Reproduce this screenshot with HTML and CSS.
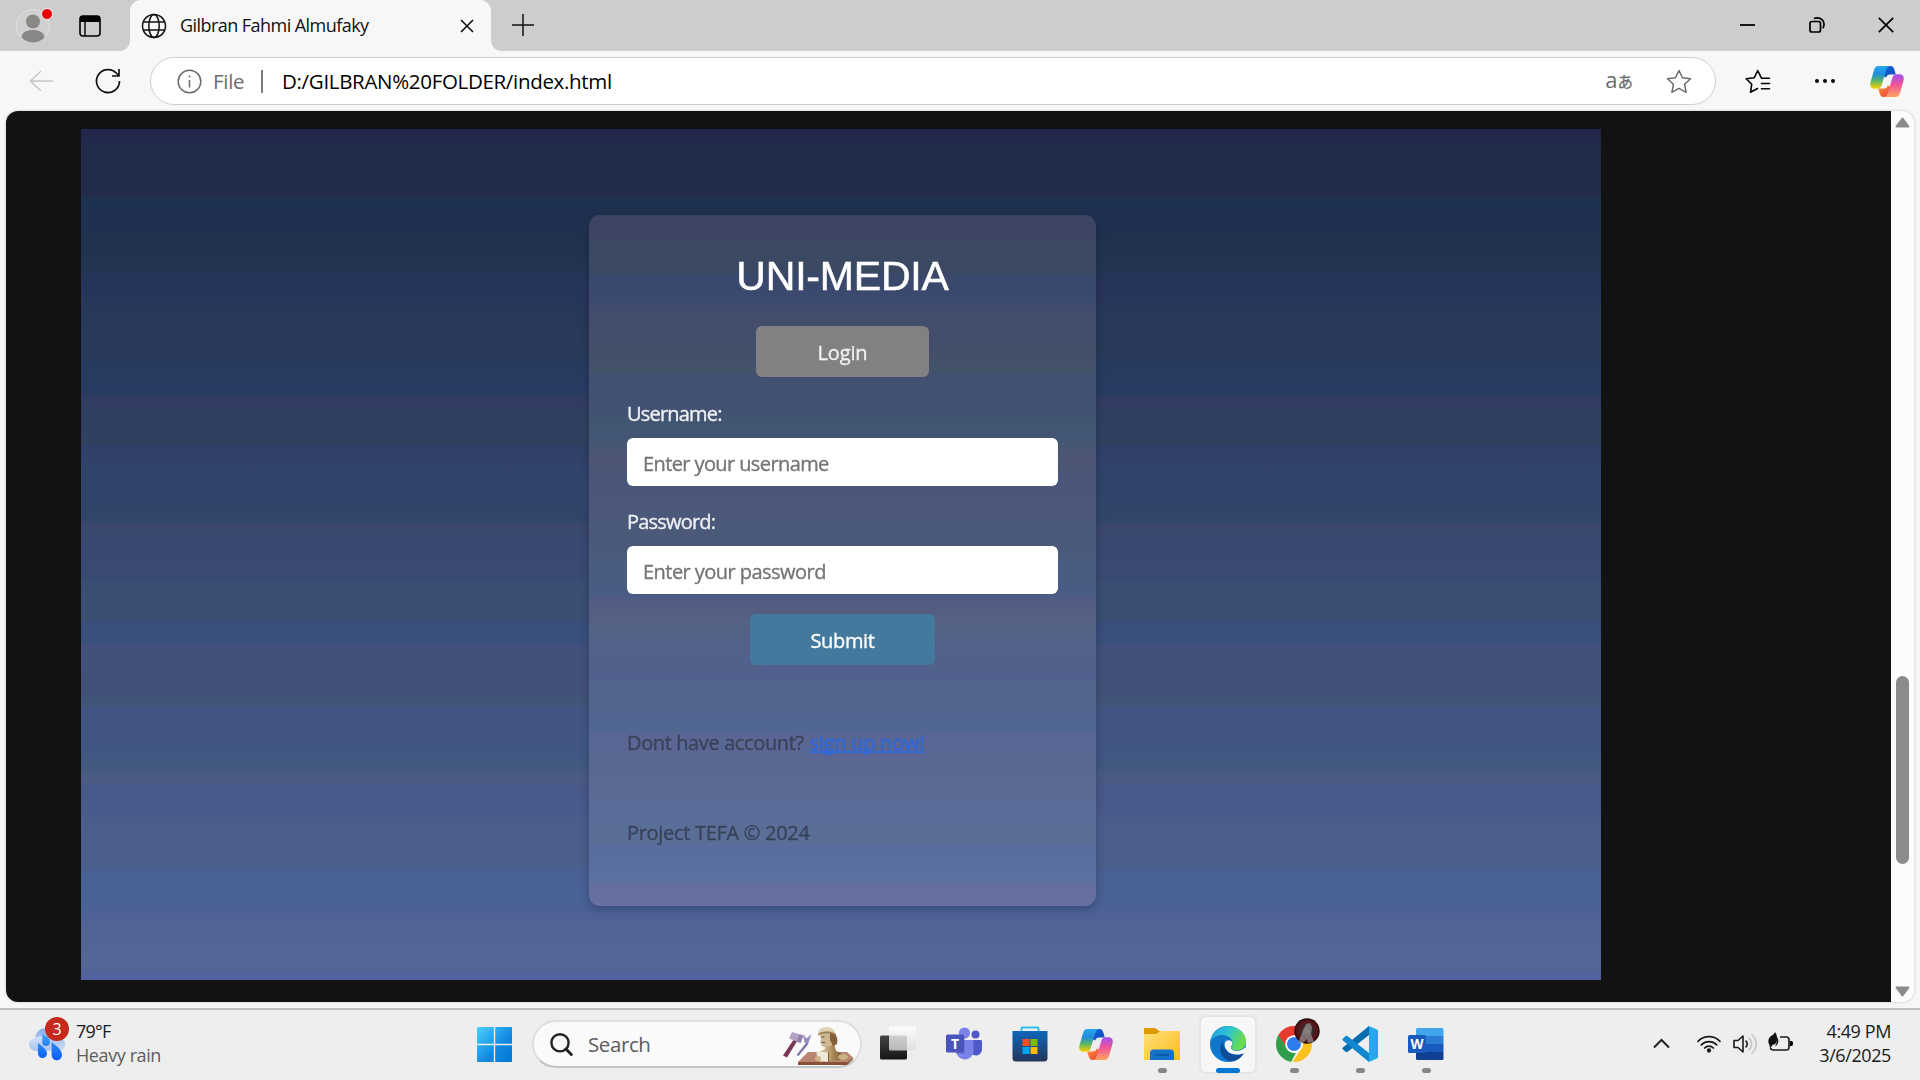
FILE: index.html
```html
<!DOCTYPE html>
<html lang="en">
<head>
<meta charset="utf-8">
<title>Gilbran Fahmi Almufaky</title>
<link rel="stylesheet" href="styles.css">
</head>
<body>
<svg width="0" height="0" class="defs" aria-hidden="true">
  <defs>
    <linearGradient id="cpA" x1="0" y1="0" x2="0" y2="1"><stop offset="0" stop-color="#28a8f0"/><stop offset=".35" stop-color="#1f8ddd"/><stop offset=".65" stop-color="#5cb56a"/><stop offset="1" stop-color="#ffd000"/></linearGradient>
    <linearGradient id="cpB" x1="0" y1="0" x2="0" y2="1"><stop offset="0" stop-color="#a24df0"/><stop offset=".45" stop-color="#f0559a"/><stop offset="1" stop-color="#ffa45c"/></linearGradient>
    <linearGradient id="cpC" x1="0" y1="0" x2="1" y2="1"><stop offset="0" stop-color="#0c6fd8"/><stop offset="1" stop-color="#173fc0"/></linearGradient>
    <linearGradient id="cpD" x1="0" y1="0" x2="1" y2="1"><stop offset="0" stop-color="#ff9a2e"/><stop offset="1" stop-color="#e8383f"/></linearGradient>
    <symbol id="copilot" viewBox="0 0 34 31">
      <path d="M17 0h3.500c2 0 3 1.200 3.600 3l1.700 5.500H20c-2 0-3.200 1-3.800 3L13 10z" fill="url(#cpC)"/>
      <path d="M17 31h-3.500c-2 0-3-1.200-3.600-3L8.200 22.500H14c2 0 3.200-1 3.800-3L21 21z" fill="url(#cpD)"/>
      <path d="M8.500 0H20c-2 .3-3 1.600-3.700 4l-4.600 15c-.8 2.500-2 3.700-4.700 3.700H4.500C1 22.700-.6 20 .5 16.300L4 4C4.800 1.400 6 0 8.500 0z" fill="url(#cpA)"/>
      <path d="M25.500 31H14c2-.3 3-1.600 3.700-4l4.600-15c.8-2.500 2-3.700 4.700-3.700h2.500c3.500 0 5.100 2.700 4 6.400L30 27c-.8 2.600-2 4-4.500 4z" fill="url(#cpB)"/>
    </symbol>
  </defs>
</svg>

<div class="screen">
  <header class="tabstrip">
    <svg class="avatar" width="42" height="42" viewBox="0 0 42 42"><circle cx="21" cy="22" r="16.500" fill="#d2d0ce" stroke="#e3e2e1"/><circle cx="21" cy="17.500" r="7" fill="#8a8886"/><path d="M9.500 33.500C10 28 15 26 21 26s11 2 11.500 7.500C29.500 37 25.500 38.500 21 38.500S12.500 37 9.500 33.500z" fill="#8a8886"/><circle cx="35" cy="10" r="5.500" fill="#e60000" stroke="#f3f3f3"/></svg>
    <svg class="workspaces" width="22" height="22" viewBox="0 0 22 22"><rect x="1" y="1" width="20" height="20" rx="3" fill="none" stroke="#000" stroke-width="1.600"/><path d="M1 7V4a3 3 0 0 1 3-3h14a3 3 0 0 1 3 3v3z"/><path d="M6 7v14" stroke="#000" stroke-width="1.400"/></svg>
    <div class="tab">
      <svg width="26" height="26" viewBox="0 0 26 26" fill="none" stroke="#111" stroke-width="1.500"><circle cx="13" cy="13" r="11.500"/><ellipse cx="13" cy="13" rx="5.200" ry="11.500"/><path d="M2.500 9h21M2.500 17h21"/></svg>
      <span class="tab-title">Gilbran Fahmi Almufaky</span>
      <svg class="tab-close" width="14" height="14" viewBox="0 0 14 14" stroke="#111" stroke-width="1.600"><path d="M1 1l12 12M13 1L1 13"/></svg>
    </div>
    <svg class="newtab" width="22" height="22" viewBox="0 0 22 22" stroke="#111" stroke-width="1.500"><path d="M11 0v22M0 11h22"/></svg>
    <div class="winbtns">
      <svg width="16" height="16" viewBox="0 0 16 16"><path d="M0 8h15" stroke="#000" stroke-width="1.800"/></svg>
      <svg width="16" height="16" viewBox="0 0 16 16" fill="none" stroke="#000" stroke-width="1.700"><rect x="1" y="4.500" width="10.500" height="10.500" rx="2"/><path d="M5 1.500C6 .9 7 .9 8.500.9 12 .9 15 3.500 15 7c0 2 0 3.500-1.500 4"/></svg>
      <svg width="16" height="16" viewBox="0 0 16 16" stroke="#000" stroke-width="1.700"><path d="M.8.800l14.400 14.400M15.200.800L.8 15.200"/></svg>
    </div>
  </header>

  <div class="toolbar">
    <svg class="back" width="25" height="22" viewBox="0 0 25 22" fill="none" stroke="#c6c6c6" stroke-width="1.500"><path d="M24 11H1.500M12 1L1.500 11 12 21"/></svg>
    <svg class="reload" width="26" height="26" viewBox="0 0 26 26" fill="none" stroke="#111" stroke-width="1.700"><path d="M24.500 13A11.500 11.500 0 1 1 21.500 5.300l2 2.200M24 1v7h-7"/></svg>
    <div class="address">
      <svg width="25" height="25" viewBox="0 0 25 25" fill="none" stroke="#6b6b6b" stroke-width="1.500"><circle cx="12.500" cy="12.500" r="11.300"/><path d="M12.500 11v7.500M12.500 6.500v2"/></svg>
      <span class="scheme">File</span>
      <span class="bar"></span>
      <span class="url">D:/GILBRAN%20FOLDER/index.html</span>
      <span class="translate"><span class="latin">a</span><span class="kana">あ</span></span>
      <svg class="fav" width="26" height="25" viewBox="0 0 26 25" fill="none" stroke="#6b6b6b" stroke-width="1.500" stroke-linejoin="round"><path d="M13 1.500l3.500 7.300 8 1-5.900 5.500 1.500 8L13 19.400l-7.100 3.900 1.500-8L1.500 9.800l8-1z"/></svg>
    </div>
    <svg class="favs" width="26" height="25" viewBox="0 0 26 25" fill="none" stroke="#000" stroke-width="1.600" stroke-linejoin="round" stroke-linecap="round"><path d="M16.500 9.200L12.700 1.500 9.200 8.800l-8 1 5.500 5.500-1.200 8L12.500 19.500M16.500 9.200h8M16.500 14.500h8M16.500 19.700h8"/></svg>
    <svg class="more" width="22" height="6" viewBox="0 0 22 6"><circle cx="3" cy="3" r="2"/><circle cx="11" cy="3" r="2"/><circle cx="19" cy="3" r="2"/></svg>
    <svg class="cp" width="34" height="31"><use href="#copilot"/></svg>
  </div>

  <main class="viewport">
    <div class="page">
      <section class="hero">
        <form class="card">
          <h1>UNI-MEDIA</h1>
          <div class="btn login">Login</div>
          <label>Username:</label>
          <div class="field user">Enter your username</div>
          <label>Password:</label>
          <div class="field pass">Enter your password</div>
          <div class="btn submit">Submit</div>
          <p class="signup"><span class="ask">Dont have account?</span> <a>sign up now!</a></p>
          <p class="copy">Project TEFA © 2024</p>
        </form>
      </section>
    </div>
    <div class="scrollbar">
      <svg width="15" height="11" viewBox="0 0 15 11"><path d="M7.500 1.500L13.500 9.500h-12z" fill="#8b8b8b" stroke="#8b8b8b" stroke-width="2" stroke-linejoin="round"/></svg>
      <div class="thumb"></div>
      <svg class="down" width="15" height="11" viewBox="0 0 15 11"><path d="M7.500 9.500L13.500 1.500h-12z" fill="#8b8b8b" stroke="#8b8b8b" stroke-width="2" stroke-linejoin="round"/></svg>
    </div>
  </main>

  <footer class="taskbar">
    <div class="weather">
      <svg width="36" height="46" viewBox="0 0 36 46"><defs><linearGradient id="cl" x1="0" y1="0" x2="0" y2="1"><stop offset="0" stop-color="#86aef0"/><stop offset="1" stop-color="#cfdcf5"/></linearGradient><linearGradient id="cm" x1="0" y1="0" x2="0" y2="1"><stop offset="0" stop-color="#d3e1f8"/><stop offset="1" stop-color="#aac4ee"/></linearGradient><linearGradient id="dr" x1="0" y1="0" x2="0" y2="1"><stop offset="0" stop-color="#3fa0f8"/><stop offset="1" stop-color="#0a5cf5"/></linearGradient></defs>
        <path d="M6 24C6 16 11 12 18 12s11 4 12 9c4 1 6 4 6 8s-3 6-7 6H12z" fill="url(#cl)"/>
        <path d="M7 35c-4 0-7-3-7-6.500S3 22 7 22c3-3 8-2 10 1 4 0 6 3 6 6s-2 6-6 6z" fill="url(#cm)"/>
        <path d="M13.500 18c4.500 2.500 7.500 5 7.500 8a3.900 3.900 0 0 1-7.800 0zM9 27c5 3.500 9 7 9 10.500a4.500 4.500 0 0 1-9 0zM22.500 26c6 4.500 10.500 8 10.500 13a5.200 5.200 0 0 1-10.400 0z" fill="url(#dr)"/></svg>
      <span class="badge">3</span>
      <div class="wtext"><div class="temp">79°F</div><div class="cond">Heavy rain</div></div>
    </div>

    <div class="center">
      <svg class="start" width="35" height="35" viewBox="0 0 35 35"><defs><linearGradient id="wn" x1="0" y1="0" x2="1" y2="1"><stop offset="0" stop-color="#4cd0fc"/><stop offset=".6" stop-color="#1288e0"/><stop offset="1" stop-color="#0078d4"/></linearGradient></defs><path d="M1 0h15.800v16.800H0V1a1 1 0 0 1 1-1zM18.200 0H34a1 1 0 0 1 1 1v15.800H18.200zM0 18.200h16.800V35H1a1 1 0 0 1-1-1zM18.200 18.200H35V34a1 1 0 0 1-1 1H18.200z" fill="url(#wn)"/></svg>
      <div class="search">
        <svg width="23" height="23" viewBox="0 0 23 23" fill="none" stroke="#222" stroke-width="2.400" stroke-linecap="round"><circle cx="10" cy="9.800" r="8.600"/><path d="M16 16l5.300 5.500" stroke-width="3"/></svg>
        <span class="stext">Search</span>
        <svg class="art" width="70" height="38" viewBox="0 0 70 38">
          <defs><linearGradient id="bu" x1="0" y1="0" x2="1" y2="0"><stop offset="0" stop-color="#e4d8bd"/><stop offset=".5" stop-color="#b99a68"/><stop offset="1" stop-color="#7b5a35"/></linearGradient></defs>
          <path d="M25 25h39l6 5.500-6 4.500H15z" fill="#b88670"/><path d="M15 35h49l6-4.500v1.500L64 38H15z" fill="#8a4f36"/>
          <path d="M11 12l3.500 1.500L4 30.500l-4-2z" fill="#7a3655"/><path d="M9 5l11.500 3.500-3 7.500L6 11.500z" fill="#b3a2c3"/><path d="M16.500 7.300l4 1.200-3 7.500-4-1.500z" fill="#9583ac"/>
          <path d="M23.500 15.500l2 1.300L15.500 29l-2-1z" fill="#7b72a8"/><path d="M20 7l3.500 4.500L28.500 7l-3.500 10-3.500-1.500z" fill="#958bbd"/>
          <path d="M42 18l9-2 2 8c3 1 6 2 6 5l-2 4-20 2-2-10 7-3z" fill="url(#bu)"/>
          <path d="M36.500 6h14c1 5 1 9-1.500 12.500l-6 1.500c-3 .500-5-1-5-3.500l-1-1.500 1-3z" fill="#cdb991"/>
          <path d="M47 6l4-1c3 4 4.500 9 2.500 12.500L50 19l-3-6z" fill="#83623a"/>
          <path d="M35 7c0-5 4-7 8.500-7C49 0 52 3 52.500 7c-5-3-12-3-17.500 0z" fill="#e0d3b6"/><path d="M35 7c5-4 13-3.500 17.500 0v1.500c-5-3-12-3-17.500 0z" fill="#9d8054"/>
          <path d="M38.500 10h3M39 15.500h3" stroke="#66502f" stroke-width="1.200"/>
          <path d="M33 24l12 1.500V35l-10-2z" fill="#efe8d8"/><path d="M45 25.500l1-.5v10h-1z" fill="#806038"/><ellipse cx="35" cy="31.500" rx="3" ry="2.500" fill="#cdb688"/><ellipse cx="60" cy="30" rx="5" ry="3" fill="#c9b182"/>
        </svg>
      </div>
      <div class="app"><svg width="36" height="36" viewBox="0 0 36 36"><defs><linearGradient id="tv" x1="0" y1="0" x2="0" y2="1"><stop offset="0" stop-color="#444"/><stop offset="1" stop-color="#161616"/></linearGradient><linearGradient id="tw" x1="0" y1="0" x2="0" y2="1"><stop offset="0" stop-color="#fff"/><stop offset="1" stop-color="#ddd"/></linearGradient></defs><rect x="0" y="9.500" width="27" height="24" rx="1.500" fill="url(#tv)"/><rect x="9" y=".5" width="27" height="24" rx="1.500" fill="url(#tw)" opacity=".8"/></svg></div>
      <div class="app"><svg width="36" height="36" viewBox="0 0 36 36"><circle cx="18.500" cy="7" r="5.600" fill="#7b83eb"/><circle cx="29.500" cy="8.500" r="4" fill="#5059c9"/><path d="M24 14h10.500c1 0 1.500.6 1.500 1.500V23c0 4-3 6.500-6 6.500-4 0-6-3-6-6z" fill="#5059c9"/><path d="M11 14h15c1 0 1.500.6 1.500 1.500v9c0 5-4 9-8.500 9s-9-4-9-9v-9z" fill="#7b83eb"/><path d="M10 10h9v18h-9z" fill="#444791" opacity=".25"/><rect x="0" y="8.500" width="18" height="18" rx="1.600" fill="#4b53bc"/><text x="9" y="22.500" text-anchor="middle" class="glyph" font-size="14">T</text></svg></div>
      <div class="app"><svg width="36" height="36" viewBox="0 0 36 36"><defs><linearGradient id="st" x1="0" y1="0" x2="0" y2="1"><stop offset="0" stop-color="#0f66ba"/><stop offset="1" stop-color="#24365c"/></linearGradient></defs><path d="M9.500 6V2.500a1 1 0 0 1 1-1h15a1 1 0 0 1 1 1V6" fill="none" stroke="#2fc0f2" stroke-width="2"/><path d="M.5 5h35v27a3.500 3.500 0 0 1-3.500 3.500H4A3.500 3.500 0 0 1 .5 32z" fill="url(#st)"/><path d="M10.500 13h7v7h-7z" fill="#f25022"/><path d="M18.500 13h7v7h-7z" fill="#7fba00"/><path d="M10.500 21h7v7h-7z" fill="#00a4ef"/><path d="M18.500 21h7v7h-7z" fill="#ffb900"/></svg></div>
      <div class="app"><svg width="34" height="31"><use href="#copilot"/></svg></div>
      <div class="app run"><svg width="36" height="36" viewBox="0 0 36 36"><defs><linearGradient id="fo" x1="0" y1="0" x2="1" y2="1"><stop offset="0" stop-color="#ffe07a"/><stop offset="1" stop-color="#fdbb1f"/></linearGradient></defs><path d="M0 3a1 1 0 0 1 1-1h9.500c2 0 3 3 5.500 3v5H0z" fill="#dd9a00"/><path d="M0 8h12c2 0 2.500-3 5-3h18a1 1 0 0 1 1 1v28H0z" fill="url(#fo)"/><path d="M6 34V27a3.500 3.500 0 0 1 3.500-3.500h17A3.500 3.500 0 0 1 30 27v7z" fill="#1272c8"/><path d="M11 29h14" stroke="#0b559e" stroke-width="1.600"/></svg><i></i></div>
      <div class="app run active"><svg width="36" height="36" viewBox="0 0 36 36"><defs><linearGradient id="ea" x1="0" y1="0" x2="1" y2=".4"><stop offset="0" stop-color="#1f95e0"/><stop offset=".5" stop-color="#2cc4d3"/><stop offset="1" stop-color="#6bdc4c"/></linearGradient><linearGradient id="eb" x1="0" y1="0" x2="0" y2="1"><stop offset="0" stop-color="#1573bd"/><stop offset="1" stop-color="#0a7ad8"/></linearGradient></defs><circle cx="18" cy="18" r="18" fill="url(#eb)"/><path d="M.3 15.500C1.500 6 9 0 18 0c10 0 18 7 18 15 0 6-4 9.500-9 9.500-4 0-6-1.500-6-3 0-1.200 1.500-1.500 1.500-4.500 0-4-4-8-10-8C7 9 3 11.500.3 15.500z" fill="url(#ea)"/><path d="M13.500 15c-4 3.500-4.500 11-.5 15.500 3 3.500 7 5.500 11 4.500 4-1 8-4 10-8-5 2.500-13 3-17-1.500-3-3.500-5-7.500-3.500-10.500z" fill="#104c94"/><path d="M15 16.500c1.500-3 6.500-3 7.300.3.400 2.500-1.500 3-1.500 4.700 0 2.200 3 3.400 6.500 3.400 2.500 0 5.500-.8 7.700-3.300L37 23l-2.300 4c-4 2-12.500 2.500-16.700-1.500-3-2.800-4-6-3-9z" fill="#f7f7f7"/></svg><i></i></div>
      <div class="app run"><svg class="chrome" width="44" height="44" viewBox="0 0 44 44"><defs><clipPath id="cc"><circle cx="18" cy="26" r="18"/></clipPath><radialGradient id="av"><stop offset="0" stop-color="#777"/><stop offset=".45" stop-color="#3b2627"/><stop offset=".8" stop-color="#5c1418"/><stop offset="1" stop-color="#160608"/></radialGradient></defs><g clip-path="url(#cc)"><path d="M0 8h36v9.500H18l-7.400 12.800L0 14z" fill="#e63b2e"/><path d="M0 8l2.500 9 8 13.300c2 3.500 5 4.500 7.500 4.500h2L15 44H-2V14z" fill="#2f9e4b"/><path d="M18 17.500h20V44H16.500l8.900-13.500c3-5 .6-11-7.400-13z" fill="#fcc31e"/></g><circle cx="18" cy="26" r="8.800" fill="#fff"/><circle cx="18" cy="26" r="7" fill="#2f7bf0"/><circle cx="31" cy="13" r="12.700" fill="url(#av)"/><path d="M22 25l4-10 4-9 4-1 2 4-1 7 3 8-6 1-1-4-4 4z" fill="#8b8585" opacity=".8"/></svg><i></i></div>
      <div class="app run"><svg width="36" height="36" viewBox="0 0 36 36"><path d="M1 23.500l2.500 2.300c.7.600 1.500.5 2.200 0L27 9V0L.9 21.500c-.7.700-.6 1.400.1 2z" fill="#0a6cb0"/><path d="M.9 14.500c-.7-.7-.6-1.400.1-2l2.500-2.300c.7-.6 1.500-.5 2.200 0L27 27v9z" fill="#1187cf"/><path d="M27 0l8 3.500c.7.400 1 1 1 1.800v25.400c0 .8-.3 1.400-1 1.800L27 36z" fill="#27a8ee"/></svg><i></i></div>
      <div class="app run"><svg width="36" height="36" viewBox="0 0 36 36"><path d="M9.500 2H34a1.500 1.500 0 0 1 1.500 1.500V10H8V3.500A1.500 1.500 0 0 1 9.500 2z" fill="#41a5ee"/><path d="M8 10h27.500v8H8z" fill="#2b7cd3"/><path d="M8 18h27.500v8H8z" fill="#185abd"/><path d="M8 26h27.500v6.500A1.500 1.500 0 0 1 34 34H9.500A1.500 1.500 0 0 1 8 32.500z" fill="#103f91"/><rect x="0" y="9" width="18" height="18" rx="1.600" fill="#185abd"/><text x="9" y="23" text-anchor="middle" class="glyph" font-size="13.500">W</text></svg><i></i></div>
    </div>

    <div class="tray">
      <svg class="chev" width="17" height="11" viewBox="0 0 17 11" fill="none" stroke="#222" stroke-width="2"><path d="M1 9.500l7.500-7.500L16 9.500"/></svg>
      <svg class="wifi" width="24" height="20" viewBox="0 0 24 20" fill="none" stroke="#1b1b1b" stroke-width="1.700" stroke-linecap="round"><path d="M1 7.300a15.500 15.500 0 0 1 22 0M4.300 10.800a10.800 10.800 0 0 1 15.400 0M7.600 14a6.300 6.300 0 0 1 8.800 0"/><circle cx="12" cy="16.500" r="1.300" fill="#1b1b1b"/></svg>
      <svg class="vol" width="25" height="20" viewBox="0 0 25 20" fill="none" stroke="#1b1b1b" stroke-width="1.600" stroke-linejoin="round" stroke-linecap="round"><path d="M1 6.500h4L10 2v16l-5-4.500H1zM13 7c1.500 1.800 1.500 4.200 0 6"/><path d="M16 4c3.500 3.500 3.500 8.500 0 12M19 1c5.500 5 5.500 13 0 18" stroke="#c3c3c3"/></svg>
      <svg class="bat" width="25" height="20" viewBox="0 0 25 20"><path d="M12 5h6.500A2.500 2.500 0 0 1 21 7.500v8a2.500 2.500 0 0 1-2.500 2.500H5a2.500 2.500 0 0 1-2.500-2" fill="none" stroke="#1b1b1b" stroke-width="1.700"/><path d="M22 9h1.500c1 0 1.500 1 1.500 2.500s-.5 2.500-1.500 2.500H22z"/><path d="M7 0c2.500 3 3 9 .2 12L4.500 13 2 16.500 1.500 13C-.5 10 0 5.500 4 3.500 5.500 2.800 6.500 1.500 7 0zM9.500 5c1.500 4 1 7.500-2.500 9.500l1.500-3.500z" fill="#111"/></svg>
      <div class="clock"><div class="time">4:49 PM</div><div class="date">3/6/2025</div></div>
    </div>
  </footer>
</div>
</body>
</html>
```
FILE: styles.css
```css
* { box-sizing: border-box; }
body { margin: 0; font-family: "Open Sans", "Noto Sans", sans-serif; color: #1b1b1b; }
svg { display: block; flex: none; overflow: visible; }
span, p, label, h1, .field, .btn, .clock div, .wtext div { white-space: nowrap; }
.defs { position: absolute; }
.screen { width: 1920px; height: 1080px; overflow: hidden; display: flex; flex-direction: column; background: #f7f7f7; }

.tabstrip { height: 51px; flex: none; background: #cdcdcd; display: flex; align-items: center; }
.avatar { margin: 0 0 2px 12px; }
.workspaces { margin-left: 25px; }
.tab { position: relative; width: 361px; height: 51px; margin-left: 29px; padding: 0 17px 0 11px; display: flex; align-items: center; background: #f7f7f7; border-radius: 11px 11px 0 0; }
.tab::before, .tab::after { content: ""; position: absolute; bottom: 0; width: 10px; height: 10px; }
.tab::before { left: -10px; background: radial-gradient(circle at 0 0, transparent 9.500px, #f7f7f7 10px); }
.tab::after { right: -10px; background: radial-gradient(circle at 100% 0, transparent 9.500px, #f7f7f7 10px); }
.tab-title { margin-left: 13px; margin-bottom: 1px; font-size: 18px; line-height: 24px; letter-spacing: -0.55px; color: #111; }
.tab-close { margin-left: auto; }
.newtab { margin-left: 21px; margin-bottom: 2px; }
.winbtns { display: flex; gap: 53px; margin: 0 26px 1px auto; }

.toolbar { height: 60px; flex: none; display: flex; align-items: center; }
.back { margin-left: 29px; margin-bottom: 1px; }
.reload { margin-left: 41px; }
.address { width: 1566px; height: 48px; margin-left: 29px; padding: 0 23px 0 26px; display: flex; align-items: center; background: #fff; border: 1px solid #cfcfcf; border-radius: 24px; }
.scheme { margin-left: 11px; width: 48px; font-size: 20.500px; letter-spacing: -0.3px; color: #6b6b6b; }
.bar { width: 2px; height: 23px; background: #7d7d7d; }
.url { margin-left: 19px; font-size: 20.500px; letter-spacing: -0.32px; color: #000; }
.translate { margin-left: auto; margin-bottom: 3px; display: flex; align-items: baseline; color: #6b6b6b; line-height: 24px; }
.latin { font-size: 22px; }
.kana { font-family: "Noto Sans CJK JP", sans-serif; font-size: 15.500px; -webkit-text-stroke: .3px #6b6b6b; }
.fav { margin-left: 33px; }
.favs { margin-left: 29px; }
.more { margin-left: 43px; }
.cp { margin-left: 34px; }

.viewport { height: 891px; width: 1908px; flex: none; margin-left: 6px; display: flex; border-radius: 12px; overflow: hidden; background: #fcfcfc; box-shadow: 0 0 2px 1px #dedede; }
.page { width: 1885px; background: #121212; padding: 18px 0 0 75px; }
.hero {
  width: 1520px; height: 851px; padding: 86px 0 0 508px;
  background: linear-gradient(#20254b 0, #212b4b 17px, #212b4a 67px, #1f3150 69px, #203150 108px, #213450 137px, #27345a 149px, #28355a 171px, #283859 178px, #293a59 229px, #263b60 235px, #293b62 264px, #313c62 269px, #303f61 286px, #31405f 315px, #303f69 318px, #32426b 338px, #30446b 344px, #31456b 390px, #3b486b 398px, #3a4872 413px, #3a4a73 450px, #3a4e73 453px, #3b4f73 490px, #394e7c 496px, #3a507b 513px, #43507b 519px, #425079 562px, #425578 574px, #435683 579px, #425683 625px, #41597f 637px, #4c5a83 648px, #485889 660px, #4a5a8a 686px, #4b5d8b 689px, #4c5e8b 737px, #496094 743px, #4a6295 780px, #526196 792px, #546494 803px, #546596 838px, #51629f 849px);
}
.card {
  width: 507px; height: 691px; padding: 38px 38px 0; display: flex; flex-direction: column; align-items: flex-start; border-radius: 11px; font-size: 20px; line-height: 24px; -webkit-text-stroke: .35px; box-shadow: 0 3px 9px rgba(10, 15, 40, .3);
  background: linear-gradient(#3b4461 0, #3c4663 23px, #3b4964 25px, #3b4862 57px, #3a486b 60px, #3c4970 87px, #424c6c 92px, #444f6a 142px, #435368 152px, #425070 162px, #425173 192px, #42556f 205px, #435675 225px, #495672 232px, #4d5672 248px, #4a567a 262px, #4b5a79 338px, #485d80 345px, #495c84 378px, #535c82 388px, #546283 408px, #53618a 425px, #515f8c 462px, #50648d 465px, #516690 515px, #5a6693 522px, #5b6994 578px, #5a6d98 588px, #5a6e98 625px, #596c9e 632px, #5a6ea0 652px, #5a719f 662px, #656f9d 672px, #666f9f 691px);
  filter: blur(.4px);
}
.card h1 { margin: 0; align-self: center; font: 400 41px/46px "Liberation Sans", sans-serif; letter-spacing: -0.2px; color: #fff; -webkit-text-stroke: .5px #fff; }
.btn { align-self: center; height: 51px; padding-top: 1px; line-height: 51px; border-radius: 6px; text-align: center; color: #f1f1f1; }
.login { width: 173px; margin-top: 27px; background: #828082; letter-spacing: -0.15px; }
.submit { width: 185px; margin-top: 20px; background: #42799c; color: #fff; letter-spacing: -0.35px; }
label { margin-top: 25px; color: #eef0f5; letter-spacing: -0.8px; }
.field + label { margin-top: 24px; }
.field { width: 431px; height: 48px; margin-top: 12px; padding: 2px 16px 0; line-height: 48px; background: #fff; border-radius: 6px; color: #757575; letter-spacing: -0.6px; }
.field.pass { letter-spacing: -0.54px; }
.card p { margin: 66px 0 0; color: #38435a; letter-spacing: -0.38px; }
.card .copy { margin-top: 66px; letter-spacing: -0.3px; }
.signup a { margin-left: 1px; color: #2d68dc; letter-spacing: -0.25px; text-decoration: underline; text-decoration-thickness: 2px; text-decoration-skip-ink: none; }
.scrollbar { width: 23px; padding-top: 6px; display: flex; flex-direction: column; align-items: center; }
.thumb { width: 13px; height: 188px; margin-top: 548px; border-radius: 7px; background: #8b8b8b; }
.down { margin-top: 122px; }

.taskbar { height: 72px; flex: none; margin-top: 6px; border-top: 2px solid #bfbfbf; background: #eee; display: flex; font-size: 18px; line-height: 24px; }
.weather { position: relative; width: 477px; padding: 6px 0 0 29px; display: flex; }
.badge { position: absolute; left: 45px; top: 7px; width: 24px; height: 24px; border-radius: 50%; background: #c42b1c; color: #fff; font-size: 16px; text-align: center; }
.wtext { margin-left: 11px; margin-top: 3px; }
.temp { letter-spacing: -0.8px; }
.cond { color: #5d5d5d; letter-spacing: -0.4px; }
.center { display: flex; width: 1176px; }
.start { margin-top: 17px; }
.search { width: 330px; height: 48px; margin: 10px 7px 0 20px; padding: 0 7px 0 16px; display: flex; align-items: center; background: #fafafa; border: 2px solid #dedede; border-bottom-color: #c4c4c4; border-radius: 24px; }
.stext { margin-left: 15px; font-size: 20.500px; color: #5c5c5c; letter-spacing: -0.4px; }
.art { margin-left: auto; margin-top: 3px; }
.app { position: relative; width: 58px; height: 59px; margin: 5px 8px 0 0; display: flex; align-items: center; justify-content: center; padding-bottom: 1px; border-radius: 7px; }
.app i { position: absolute; left: 25px; bottom: 1px; width: 9px; height: 5px; border-radius: 3px; background: #868686; }
.active { background: #f7f7f7; border: 2px solid #e4e4e4; }
.active i { left: 15px; bottom: -1px; width: 24px; background: #0078d4; }
.chrome { margin: -8px -8px 0 0; }
.glyph { fill: #fff; font-family: "Open Sans", sans-serif; font-weight: 700; }
.tray { width: 238px; display: flex; }
.chev { margin-top: 28px; }
.wifi { margin: 24px 0 0 27px; }
.vol { margin: 24px 0 0 12px; }
.bat { margin: 22px 0 0 10px; }
.clock { width: 99px; margin-top: 9px; text-align: right; }
.time, .date { letter-spacing: -0.4px; }
```
